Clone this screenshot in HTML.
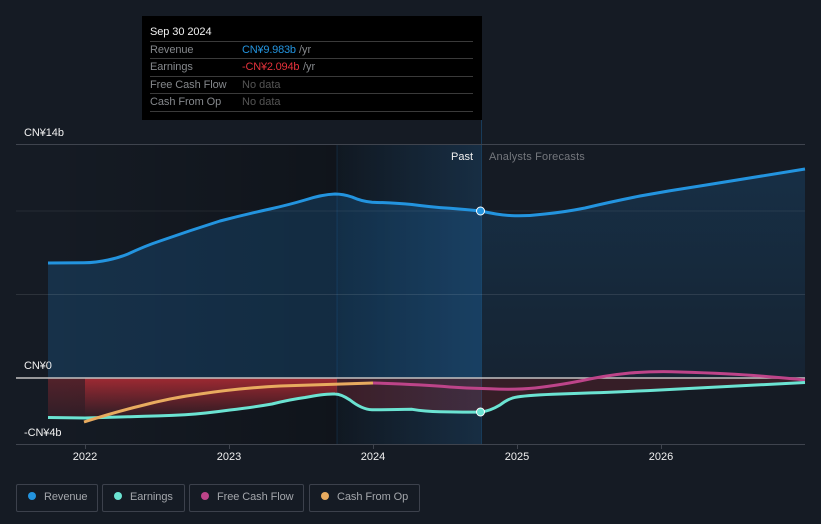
<!DOCTYPE html>
<html><head><meta charset="utf-8">
<style>
html,body{margin:0;padding:0;background:#151b24;}
body{width:821px;height:524px;overflow:hidden;position:relative;font-family:"Liberation Sans",sans-serif;}
svg{position:absolute;left:0;top:0}
text{font-family:"Liberation Sans",sans-serif;font-size:11px}
.tt{letter-spacing:-.08px}
.lb{position:absolute;top:484px;height:26px;border:1px solid #3c414c;border-radius:2px;color:#a3a6ab;font-size:11px;line-height:24px}
.lb i{position:absolute;left:11px;top:7px;width:8px;height:8px;border-radius:50%}
.lb span{position:absolute;left:27px;top:0;white-space:nowrap;letter-spacing:-.08px}
</style></head><body>
<svg width="821" height="524" viewBox="0 0 821 524">
<defs>
<linearGradient id="dark" x1="48" x2="481" y1="0" y2="0" gradientUnits="userSpaceOnUse"><stop offset="0" stop-color="#000" stop-opacity="0"/><stop offset=".667" stop-color="#000" stop-opacity=".25"/><stop offset="1" stop-color="#000" stop-opacity="0"/></linearGradient>
<linearGradient id="band" x1="337" x2="481" y1="0" y2="0" gradientUnits="userSpaceOnUse"><stop offset="0" stop-color="#2196f3" stop-opacity=".03"/><stop offset="1" stop-color="#2196f3" stop-opacity=".15"/></linearGradient>
<linearGradient id="fc" x1="0" x2="0" y1="169" y2="378" gradientUnits="userSpaceOnUse"><stop offset="0" stop-color="#2196f3" stop-opacity=".16"/><stop offset="1" stop-color="#2196f3" stop-opacity=".07"/></linearGradient>
<linearGradient id="red" x1="0" x2="0" y1="378" y2="422" gradientUnits="userSpaceOnUse"><stop offset="0" stop-color="#e5323b" stop-opacity=".66"/><stop offset="1" stop-color="#e5323b" stop-opacity=".06"/></linearGradient>
<linearGradient id="red2" x1="0" x2="0" y1="378" y2="420" gradientUnits="userSpaceOnUse"><stop offset="0" stop-color="#e5323b" stop-opacity=".3"/><stop offset="1" stop-color="#e5323b" stop-opacity=".12"/></linearGradient>
</defs>
<rect x="48" y="145" width="433" height="299" fill="url(#dark)"/>
<rect x="337" y="145" width="144" height="299" fill="url(#band)"/>
<line x1="337" x2="337" y1="145" y2="444" stroke="#2196f3" stroke-opacity=".14"/>
<line x1="481.500" x2="481.500" y1="120" y2="444" stroke="#2196f3" stroke-opacity=".26"/>

<path d="M48 263 L84 262.800 Q96 262.600 108 260 Q118 258 128 254 Q145 246 160 241 Q190 230.500 220 221 Q245 214.500 270 209 Q290 204.500 305 200 Q322 194.500 335 194 Q343 194 352 197 Q362 201.500 372 202.200 Q395 203 412 204.500 Q430 207 450 208.300 Q465 209.500 481 211 L481 378 L48 378Z" fill="#2196f3" fill-opacity=".18"/>
<path d="M481 211 Q500 215.500 515 215.700 Q530 216 545 214 Q565 212 585 208 Q610 202 640 196 Q670 190.500 700 186 Q750 177.700 805 169 L805 378 L481 378Z" fill="url(#fc)"/>

<path d="M48 378 H85 V418 L48 417.500Z" fill="url(#red2)"/>
<path d="M85 378 H337 V394 L325 395 L300 398 L270 404 L230 410 L180 415 L130 416.700 L85 418Z" fill="url(#red)"/>
<path d="M337 378 H481 V412 L440 411.700 L412 409.300 L372 409.700 L360 407 L350 400 L337 394Z" fill="#e5323b" fill-opacity=".2"/>
<path d="M481 378 H805 V382.500 L720 387 L660 390 L620 392 L560 394 L530 395.500 L517 397 L507 400.500 L495 408 L481 412Z" fill="#e5323b" fill-opacity=".16"/>

<g stroke-width="1" fill="none">
<line x1="16" x2="805" y1="144.500" y2="144.500" stroke="#3f444e"/>
<line x1="16" x2="805" y1="211" y2="211" stroke="#ffffff" stroke-opacity=".07"/>
<line x1="16" x2="805" y1="294.500" y2="294.500" stroke="#ffffff" stroke-opacity=".1"/>
<line x1="16" x2="805" y1="378" y2="378" stroke="#c4c2c2" stroke-width="1.500"/>
<line x1="16" x2="805" y1="444.500" y2="444.500" stroke="#3f444e"/>
<path d="M85.500 444V449M229.500 444V449M373.500 444V449M517.500 444V449M661.500 444V449" stroke="#3f444e"/>
</g>

<g fill="none" stroke-width="3" stroke-linejoin="round" stroke-linecap="butt">
<path d="M48 263 L84 262.800 Q96 262.600 108 260 Q118 258 128 254 Q145 246 160 241 Q190 230.500 220 221 Q245 214.500 270 209 Q290 204.500 305 200 Q322 194.500 335 194 Q343 194 352 197 Q362 201.500 372 202.200 Q395 203 412 204.500 Q430 207 450 208.300 Q465 209.500 481 211 Q500 215.500 515 215.700 Q530 216 545 214 Q565 212 585 208 Q610 202 640 196 Q670 190.500 700 186 Q750 177.700 805 169" stroke="#2394df"/>
<path d="M373 383 Q420 384.500 450 387 Q470 388.500 490 388.800 Q515 390 535 388 Q560 385 580 381 Q605 375.500 630 373 Q655 371 680 372 Q730 373.500 760 376 Q790 378.500 805 380" stroke="#bd4489"/>
<path d="M48 417.500 L85 418 Q108 417.500 130 416.700 Q160 416 185 414.800 Q205 413.500 230 410 Q255 407 272 404 Q290 399.500 305 397.500 Q325 393.500 335 394 Q341 394 350 400 Q362 409.500 372 409.700 Q395 409.800 412 409.300 Q425 411.500 440 411.700 Q465 412.300 481 412 Q490 411 500 405 Q509 398 517 397 Q530 395 560 394 Q620 392 660 390 Q720 386.800 805 382.500" stroke="#6be3d2"/>
<path d="M84 422 Q115 412 140 406 Q170 398 200 394 Q240 388 280 386 Q330 384.500 373 383" stroke="#e8ab5f"/>
</g>

<circle cx="480.500" cy="211" r="4" fill="#2394df" stroke="#fff" stroke-width="1"/>
<circle cx="480.500" cy="412" r="4" fill="#6be3d2" stroke="#fff" stroke-width="1"/>

<g fill="#f0f0f0">
<text x="24" y="136" class="tt">CN¥14b</text>
<text x="24" y="369" class="tt">CN¥0</text>
<text x="24" y="436" class="tt">-CN¥4b</text>
<text x="85" y="460" text-anchor="middle">2022</text>
<text x="229" y="460" text-anchor="middle">2023</text>
<text x="373" y="460" text-anchor="middle">2024</text>
<text x="517" y="460" text-anchor="middle">2025</text>
<text x="661" y="460" text-anchor="middle">2026</text>
<text x="473" y="160" text-anchor="end">Past</text>
</g>
<text x="489" y="160" fill="#74777d" letter-spacing=".17">Analysts Forecasts</text>

<rect x="142" y="16" width="340" height="104" fill="#000"/>
<g stroke="#3a3a3a">
<line x1="150" x2="473" y1="41.500" y2="41.500"/>
<line x1="150" x2="473" y1="58.500" y2="58.500"/>
<line x1="150" x2="473" y1="76.500" y2="76.500"/>
<line x1="150" x2="473" y1="93.500" y2="93.500"/>
<line x1="150" x2="473" y1="111.500" y2="111.500"/>
</g>
<text x="150" y="35" fill="#f0f0f0" class="tt">Sep 30 2024</text>
<g fill="#85888c" class="tt">
<text x="150" y="53">Revenue</text>
<text x="150" y="70">Earnings</text>
<text x="150" y="88">Free Cash Flow</text>
<text x="150" y="105">Cash From Op</text>
</g>
<text x="242" y="53" fill="#2394df" letter-spacing="-.2">CN¥9.983b</text>
<text x="299" y="53" fill="#85888c">/yr</text>
<text x="242" y="70" fill="#e5323b" letter-spacing="-.2">-CN¥2.094b</text>
<text x="303" y="70" fill="#85888c">/yr</text>
<text x="242" y="88" fill="#555">No data</text>
<text x="242" y="105" fill="#555">No data</text>
</svg>
<div class="lb" style="left:16px;width:80px"><i style="background:#2394df"></i><span>Revenue</span></div>
<div class="lb" style="left:102px;width:81px"><i style="background:#6be3d2"></i><span>Earnings</span></div>
<div class="lb" style="left:189px;width:113px"><i style="background:#bd4489"></i><span>Free Cash Flow</span></div>
<div class="lb" style="left:309px;width:109px"><i style="background:#e8ab5f"></i><span>Cash From Op</span></div>
</body></html>
